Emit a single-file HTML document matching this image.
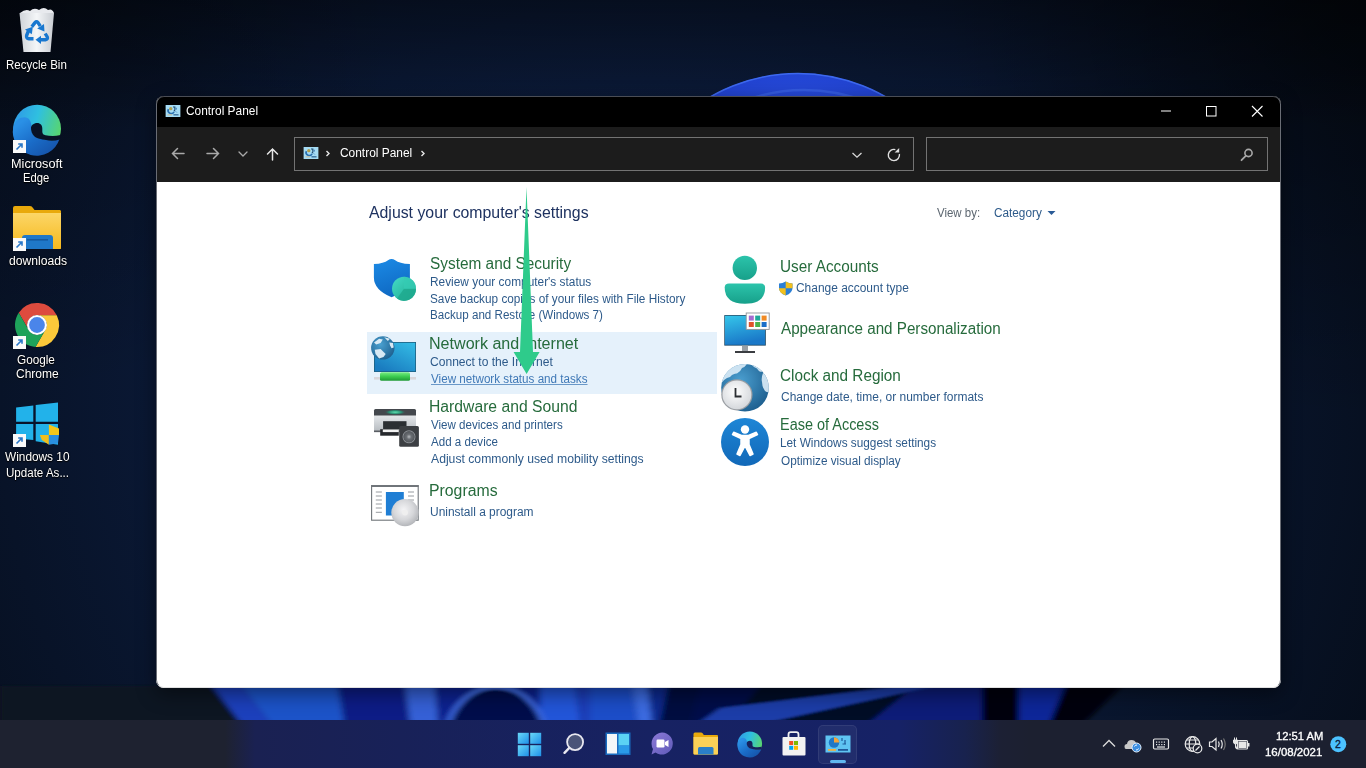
<!DOCTYPE html>
<html><head><meta charset="utf-8">
<style>
html,body{margin:0;padding:0;width:1366px;height:768px;overflow:hidden;}
body{position:relative;background:#060d1c;font-family:'Liberation Sans',sans-serif;}
.t{position:absolute;white-space:nowrap;font-family:'Liberation Sans',sans-serif;}
.abs{position:absolute;}
svg{position:absolute;overflow:visible;}
.dl{color:#fff;text-shadow:0 0 2px rgba(0,0,0,.9),0 1px 1px rgba(0,0,0,.8);}
</style></head><body>
<svg class="abs" style="left:0;top:0" width="1366" height="768" viewBox="0 0 1366 768">
<defs>
<radialGradient id="bg" cx="640" cy="400" r="800" gradientUnits="userSpaceOnUse">
<stop offset="0" stop-color="#10244c"/><stop offset="0.6" stop-color="#0a1834"/><stop offset="1" stop-color="#060e1c"/>
</radialGradient>
<radialGradient id="tr" cx="1366" cy="0" r="420" gradientUnits="userSpaceOnUse">
<stop offset="0" stop-color="#000" stop-opacity="0.5"/><stop offset="1" stop-color="#000" stop-opacity="0"/>
</radialGradient>
<linearGradient id="tl" x1="0" y1="0" x2="0" y2="130" gradientUnits="userSpaceOnUse">
<stop offset="0" stop-color="#000" stop-opacity="0.45"/><stop offset="1" stop-color="#000" stop-opacity="0"/>
</linearGradient>
<radialGradient id="tl2" cx="0" cy="0" r="400" gradientUnits="userSpaceOnUse">
<stop offset="0" stop-color="#000" stop-opacity="0.3"/><stop offset="1" stop-color="#000" stop-opacity="0"/>
</radialGradient>
<radialGradient id="arc" cx="798" cy="150" r="120" gradientUnits="userSpaceOnUse">
<stop offset="0" stop-color="#2a50e0"/><stop offset="1" stop-color="#1f3fcc"/>
</radialGradient>
</defs>
<rect width="1366" height="768" fill="url(#bg)"/>
<rect width="1366" height="768" fill="url(#tr)"/>
<rect width="1366" height="768" fill="url(#tl)"/>
<rect width="1366" height="768" fill="url(#tl2)"/>
<circle cx="798" cy="249" r="176" fill="url(#arc)"/>
<circle cx="798" cy="249" r="175.5" fill="none" stroke="#3d68ee" stroke-width="1.5"/>
<circle cx="804" cy="262" r="172" fill="none" stroke="#3a62e4" stroke-width="2.5" opacity="0.7"/>
<filter id="bl" x="-5%" y="-50%" width="110%" height="200%"><feGaussianBlur stdDeviation="3 1"/></filter>
<g filter="url(#bl)"><polygon points="0,686 212,686 240,722 0,722" fill="#0b1424"/><polygon points="212,686 242,686 270,722 240,722" fill="#1b40bc"/><polygon points="242,686 338,686 344,722 270,722" fill="#1f53c8"/><polygon points="338,686 405,686 410,722 344,722" fill="#0c1e86"/><polygon points="405,686 435,686 438,722 410,722" fill="#3460d6"/><polygon points="435,686 540,686 540,722 438,722" fill="#0d2090"/><polygon points="540,686 575,686 580,722 540,722" fill="#2455d8"/><polygon points="575,686 590,686 590,722 580,722" fill="#1a3cb8"/><polygon points="590,686 632,686 638,722 590,722" fill="#1e4ec8"/><polygon points="632,686 648,686 652,722 638,722" fill="#3a6ae0"/><polygon points="648,686 668,686 660,722 652,722" fill="#102a90"/><polygon points="668,686 700,686 690,722 660,722" fill="#050a40"/><polygon points="700,686 760,686 730,722 690,722" fill="#06104a"/><polygon points="760,686 915,686 870,722 730,722" fill="#040a28"/><polygon points="915,686 982,686 982,722 870,722" fill="#0a1c78"/><polygon points="982,686 1019,686 1019,722 982,722" fill="#03050e"/><polygon points="1019,686 1065,686 1050,722 1019,722" fill="#0c2898"/><polygon points="1065,686 1122,686 1085,722 1050,722" fill="#020408"/>
<polygon points="700,722 770,722 935,686 900,686 720,708" fill="#1d3ca8"/><ellipse cx="496" cy="740" rx="50" ry="53" fill="#050a4c" stroke="#3a66dc" stroke-width="5"/></g>
</svg>
<svg style="left:18px;top:7px" width="38" height="46" viewBox="0 0 38 46">
<defs><linearGradient id="rb" x1="0" y1="0" x2="1" y2="0">
<stop offset="0" stop-color="#cfd3d8"/><stop offset="0.5" stop-color="#f4f6f8"/><stop offset="1" stop-color="#c8ccd2"/></linearGradient></defs>
<path d="M1.5 6 L36 6 L32.5 45 L5.5 45 Z" fill="url(#rb)"/>
<path d="M2 6 Q8 1 12 4 Q16 0 21 3 Q26 -1 30 3 Q34 1 36 6 Z" fill="#e8eaee"/>
<g stroke="#1877cf" stroke-width="3.4" fill="none" stroke-linejoin="round" stroke-linecap="butt">
<path d="M13.8 19.8 L17 15.6 Q18.5 14 20 15.6 L22.3 19.2"/>
<path d="M10.6 23.5 L8.6 28.5 Q8 31.5 11 31.8 L15.5 31.8"/>
<path d="M27.2 26.5 L29.3 30 Q30 32.5 27.5 32.8 L22.5 32.8"/>
</g>
<g fill="#1877cf">
<path d="M19.2 21.5 L26.5 24.5 L26 17 Z"/>
<path d="M7 22.5 L14.8 19.8 L13.8 27.2 Z"/>
<path d="M23 28.8 L17.5 32.8 L23 37 Z"/>
</g>
</svg>
<div class="t" style="left:6.49px;top:57.47px;font-size:12.5px;line-height:16px;color:#fff;transform:scaleX(0.9219);transform-origin:0 0;text-shadow:0 0 2px #000,0 1px 1px #000;">Recycle Bin</div>
<svg style="left:10px;top:102px" width="54" height="54" viewBox="0 0 54 54">
<defs>
<linearGradient id="ed1a" x1="0" y1="0.3" x2="1" y2="0.6"><stop offset="0" stop-color="#2f9be6"/><stop offset="0.45" stop-color="#2fc0e0"/><stop offset="1" stop-color="#5ad66a"/></linearGradient>
<linearGradient id="ed1b" x1="0.1" y1="0.2" x2="0.8" y2="1"><stop offset="0" stop-color="#2a90e6"/><stop offset="0.5" stop-color="#1a6cc8"/><stop offset="1" stop-color="#1552a8"/></linearGradient>
</defs>
<circle cx="27.1" cy="26.7" r="23.9" fill="url(#ed1a)"/>
<path d="M3.3 25 C5 18.5 9.5 15.3 14.5 15.3 C19 15.3 21.5 19.5 21.5 25 C21.2 28 22 31.5 24 33.5 C27 36.5 31 36.5 36 37.5 C40 38.5 45 38.5 49.5 37 A23.9 23.9 0 0 1 3.3 25 Z" fill="url(#ed1b)"/>
<path d="M21 25.5 C21.5 22.5 24.5 21 27.3 21 C30.3 21 32.3 23.3 32.3 26.5 L32.3 29.8 C32.3 31.8 33.5 33 35.5 33.3 C39.5 33.9 44.5 34.4 50.6 33 L49.6 37.5 C45 39 40 39 36 38 C31 37 27 37 24 34 C22 32 20.8 28.5 21 25.5 Z" fill="#081226"/>
</svg>
<svg style="left:13px;top:140px" width="13" height="13" viewBox="0 0 13 13">
<rect x="0" y="0" width="13" height="13" fill="#fafafa"/>
<path d="M3.5 9.5 L9 4 M5.2 4 H9 V7.8" stroke="#2a78c8" stroke-width="1.6" fill="none"/>
</svg>
<div class="t" style="left:10.99px;top:155.57px;font-size:12.5px;line-height:16px;color:#fff;transform:scaleX(1.0160);transform-origin:0 0;text-shadow:0 0 2px #000,0 1px 1px #000;">Microsoft</div>
<div class="t" style="left:22.90px;top:170.37px;font-size:12.5px;line-height:16px;color:#fff;transform:scaleX(0.9000);transform-origin:0 0;text-shadow:0 0 2px #000,0 1px 1px #000;">Edge</div>
<svg style="left:13px;top:205px" width="49" height="45" viewBox="0 0 49 45">
<defs><linearGradient id="fg" x1="0" y1="0" x2="0" y2="1"><stop offset="0" stop-color="#fcd667"/><stop offset="1" stop-color="#f6b91d"/></linearGradient></defs>
<path d="M0 3 Q0 1 2 1 H17 Q19 1 20 3 L21.5 5 H47 Q48 5 48 6.5 V43 Q48 44 47 44 H1 Q0 44 0 43 Z" fill="#e9a90b"/>
<path d="M0 8 H48 V43 Q48 44 47 44 H1 Q0 44 0 43 Z" fill="url(#fg)"/>
<path d="M9 44 V33 Q9 30 12 30 H37 Q40 30 40 33 V44 Z" fill="#1f78c8"/>
<rect x="14" y="34" width="21" height="1.6" fill="#145aa0"/>
</svg>
<svg style="left:13px;top:238px" width="13" height="13" viewBox="0 0 13 13">
<rect x="0" y="0" width="13" height="13" fill="#fafafa"/>
<path d="M3.5 9.5 L9 4 M5.2 4 H9 V7.8" stroke="#2a78c8" stroke-width="1.6" fill="none"/>
</svg>
<div class="t" style="left:8.60px;top:253.32px;font-size:12.5px;line-height:16px;color:#fff;transform:scaleX(0.9729);transform-origin:0 0;text-shadow:0 0 2px #000,0 1px 1px #000;">downloads</div>
<svg style="left:15px;top:303px" width="44" height="44" viewBox="-22 -22 44 44">
<path d="M-8.40 4.85 L-18.27 -12.25 A22 22 0 0 1 19.75 -9.70 L0.00 -9.70 A9.7 9.7 0 0 0 -8.40 4.85Z" fill="#dd4b3e"/>
<path d="M0.00 -9.70 L19.75 -9.70 A22 22 0 0 1 -1.47 21.95 L8.40 4.85 A9.7 9.7 0 0 0 0.00 -9.70Z" fill="#fbc93a"/>
<path d="M8.40 4.85 L-1.47 21.95 A22 22 0 0 1 -18.27 -12.25 L-8.40 4.85 A9.7 9.7 0 0 0 8.40 4.85Z" fill="#1ea25a"/>
<circle r="10.0" fill="#fff"/><circle r="7.9" fill="#4a85ea"/>
</svg>
<svg style="left:13px;top:336px" width="13" height="13" viewBox="0 0 13 13">
<rect x="0" y="0" width="13" height="13" fill="#fafafa"/>
<path d="M3.5 9.5 L9 4 M5.2 4 H9 V7.8" stroke="#2a78c8" stroke-width="1.6" fill="none"/>
</svg>
<div class="t" style="left:17.22px;top:351.67px;font-size:12.5px;line-height:16px;color:#fff;transform:scaleX(0.9400);transform-origin:0 0;text-shadow:0 0 2px #000,0 1px 1px #000;">Google</div>
<div class="t" style="left:15.79px;top:366.47px;font-size:12.5px;line-height:16px;color:#fff;transform:scaleX(0.9614);transform-origin:0 0;text-shadow:0 0 2px #000,0 1px 1px #000;">Chrome</div>
<svg style="left:15px;top:401px" width="45" height="45" viewBox="0 0 45 45">
<path d="M1.1 6.5 L18.3 4.4 V20.7 H1.1 Z" fill="#22b2ea"/>
<path d="M20.7 4.1 L43 1.4 V20.7 H20.7 Z" fill="#22b2ea"/>
<path d="M1.1 23 H18.3 V39 L1.1 37.6 Z" fill="#22b2ea"/>
<path d="M20.7 23 H43 V43.7 L20.7 40.3 Z" fill="#22b2ea"/>
<path d="M33.9 23.4 L44 27.5 V33.9 H33.9Z" fill="#f4c71a"/>
<path d="M24.8 33.9 H33.9 V43.7 L26.8 39Z" fill="#f0bf1c"/>
<path d="M33.9 33.9 H44 L43 42.3 L33.9 43.7Z" fill="#2a8fe0"/>
</svg>
<svg style="left:13px;top:434px" width="13" height="13" viewBox="0 0 13 13">
<rect x="0" y="0" width="13" height="13" fill="#fafafa"/>
<path d="M3.5 9.5 L9 4 M5.2 4 H9 V7.8" stroke="#2a78c8" stroke-width="1.6" fill="none"/>
</svg>
<div class="t" style="left:4.80px;top:449.47px;font-size:12.5px;line-height:16px;color:#fff;transform:scaleX(0.9471);transform-origin:0 0;text-shadow:0 0 2px #000,0 1px 1px #000;">Windows 10</div>
<div class="t" style="left:5.61px;top:464.57px;font-size:12.5px;line-height:16px;color:#fff;transform:scaleX(0.9254);transform-origin:0 0;text-shadow:0 0 2px #000,0 1px 1px #000;">Update As...</div>
<div class="abs" style="left:156px;top:96px;width:1125px;height:592px;border-radius:8px;overflow:hidden;background:#fff;box-shadow:0 6px 20px rgba(0,0,0,.45);">
<div class="abs" style="left:0;top:0;width:1125px;height:31px;background:#000;"></div>
<div class="abs" style="left:0;top:31px;width:1125px;height:55px;background:#1c1c1c;"></div>
<div class="abs" style="left:0;top:0;width:1123px;height:590px;border:1px solid #4a4d55;border-radius:8px;border-bottom-color:#e0e0e0;border-left-color:#6a6d75;border-right-color:#6a6d75;"></div>
</div>
<svg style="left:165px;top:105px" width="16" height="12" viewBox="0 0 16 13">
<rect x="0" y="0" width="16" height="13" fill="#a6dcf4"/>
<path d="M3 4.5 A3.3 3.3 0 0 0 9.2 7.3" stroke="#2a70b0" stroke-width="1.8" fill="none"/>
<circle cx="5.6" cy="4" r="1.8" fill="#b0a050"/>
<path d="M8 2.2 H10 V5.5 L9 6.5" stroke="#1d4a70" stroke-width="1.2" fill="none"/>
<path d="M11.5 3 V5 M11 7 L12 8" stroke="#2a6ab0" stroke-width="1"/>
<rect x="2" y="10" width="5" height="1.3" fill="#c8c0a0"/>
<rect x="8.5" y="10" width="5.5" height="1.3" fill="#2a6090"/>
</svg>
<div class="t" style="left:186.20px;top:103.47px;font-size:12.2px;line-height:16px;color:#fff;transform:scaleX(0.9753);transform-origin:0 0;">Control Panel</div>
<svg style="left:1150px;top:100px" width="130" height="22" viewBox="0 0 130 22">
<path d="M11 11 H21" stroke="#fff" stroke-width="1"/>
<rect x="56.5" y="6.5" width="9.5" height="9.5" fill="none" stroke="#fff" stroke-width="1"/>
<path d="M102 6 L112.5 16.5 M112.5 6 L102 16.5" stroke="#fff" stroke-width="1.1"/>
</svg>
<svg style="left:160px;top:140px" width="130" height="28" viewBox="0 0 130 28">
<g stroke="#a9a9a9" stroke-width="1.5" fill="none" stroke-linecap="round">
<path d="M12.5 13.5 H24 M17.5 8.5 L12.5 13.5 L17.5 18.5"/>
<path d="M47 13.5 H58.5 M53.5 8.5 L58.5 13.5 L53.5 18.5"/>
<path d="M79 12 L83 16 L87 12" stroke-width="1.3"/>
</g>
<g stroke="#e6e6e6" stroke-width="1.5" fill="none" stroke-linecap="round">
<path d="M112.5 9 V20 M107.5 14 L112.5 9 L117.5 14"/>
</g>
</svg>
<div class="abs" style="left:294px;top:137px;width:618px;height:32px;border:1px solid #737373;background:#1c1c1c;"></div>
<div class="abs" style="left:926px;top:137px;width:340px;height:32px;border:1px solid #737373;background:#1c1c1c;"></div>
<svg style="left:303px;top:147px" width="16" height="12" viewBox="0 0 16 13">
<rect x="0" y="0" width="16" height="13" fill="#a6dcf4"/>
<path d="M3 4.5 A3.3 3.3 0 0 0 9.2 7.3" stroke="#2a70b0" stroke-width="1.8" fill="none"/>
<circle cx="5.6" cy="4" r="1.8" fill="#b0a050"/>
<path d="M8 2.2 H10 V5.5 L9 6.5" stroke="#1d4a70" stroke-width="1.2" fill="none"/>
<path d="M11.5 3 V5 M11 7 L12 8" stroke="#2a6ab0" stroke-width="1"/>
<rect x="2" y="10" width="5" height="1.3" fill="#c8c0a0"/>
<rect x="8.5" y="10" width="5.5" height="1.3" fill="#2a6090"/>
</svg>
<svg style="left:320px;top:145px" width="110" height="18" viewBox="0 0 110 18">
<g stroke="#e8e8e8" stroke-width="1.4" fill="none">
<path d="M6.5 6 L9 8.5 L6.5 11"/>
<path d="M101.5 6 L104 8.5 L101.5 11"/>
</g></svg>
<div class="t" style="left:339.60px;top:145.44px;font-size:12.0px;line-height:16px;color:#fff;transform:scaleX(0.9931);transform-origin:0 0;">Control Panel</div>
<svg style="left:845px;top:140px" width="70" height="30" viewBox="0 0 70 30">
<path d="M7.5 13 L12 17.2 L16.5 13" stroke="#d8d8d8" stroke-width="1.3" fill="none"/>
<path d="M54.4 14 A5.6 5.6 0 1 1 50.35 9.6" stroke="#e0e0e0" stroke-width="1.4" fill="none"/>
<path d="M49.6 12.5 L54.2 8 L54.2 12.5Z" fill="#e0e0e0"/>
</svg>
<svg style="left:1236px;top:144px" width="22" height="22" viewBox="0 0 22 22">
<circle cx="12.5" cy="9" r="3.6" stroke="#a8a8a8" stroke-width="1.6" fill="none"/>
<path d="M9.8 11.8 L5.5 16.2" stroke="#a8a8a8" stroke-width="1.8" stroke-linecap="round"/>
</svg>
<div class="t" style="left:369.39px;top:202.16px;font-size:16px;line-height:21px;color:#1e3260;transform:scaleX(0.9900);transform-origin:0 0;">Adjust your computer's settings</div>
<div class="t" style="left:937.38px;top:205.44px;font-size:12.0px;line-height:16px;color:#5c6670;transform:scaleX(0.9556);transform-origin:0 0;">View by:</div>
<div class="t" style="left:994.20px;top:205.44px;font-size:12.0px;line-height:16px;color:#2d5a8a;transform:scaleX(0.9813);transform-origin:0 0;">Category</div>
<svg style="left:1046px;top:210px" width="11" height="6" viewBox="0 0 11 6"><path d="M1.5 1 H9.5 L5.5 5Z" fill="#2a5b96"/></svg>
<div class="abs" style="left:367px;top:332px;width:350px;height:62px;background:#e5f1fb;"></div>
<div class="t" style="left:430.02px;top:253.16px;font-size:16px;line-height:21px;color:#266b3c;transform:scaleX(0.9616);transform-origin:0 0;">System and Security</div>
<div class="t" style="left:430.03px;top:273.67px;font-size:12.5px;line-height:16px;color:#2d5a8a;transform:scaleX(0.9497);transform-origin:0 0;">Review your computer's status</div>
<div class="t" style="left:430.03px;top:290.67px;font-size:12.5px;line-height:16px;color:#2d5a8a;transform:scaleX(0.9424);transform-origin:0 0;">Save backup copies of your files with File History</div>
<div class="t" style="left:430.04px;top:307.27px;font-size:12.5px;line-height:16px;color:#2d5a8a;transform:scaleX(0.9286);transform-origin:0 0;">Backup and Restore (Windows 7)</div>
<div class="t" style="left:428.99px;top:333.16px;font-size:16px;line-height:21px;color:#266b3c;transform:scaleX(1.0048);transform-origin:0 0;">Network and Internet</div>
<div class="t" style="left:430.02px;top:353.67px;font-size:12.5px;line-height:16px;color:#2d5a8a;transform:scaleX(0.9654);transform-origin:0 0;">Connect to the Internet</div>
<div class="t" style="left:430.97px;top:370.67px;font-size:12.5px;line-height:16px;color:#3f78b6;transform:scaleX(0.9321);transform-origin:0 0;text-decoration:underline;text-decoration-color:#6a98c8;">View network status and tasks</div>
<div class="t" style="left:429.03px;top:395.76px;font-size:16px;line-height:21px;color:#266b3c;transform:scaleX(0.9819);transform-origin:0 0;">Hardware and Sound</div>
<div class="t" style="left:430.96px;top:416.67px;font-size:12.5px;line-height:16px;color:#2d5a8a;transform:scaleX(0.9259);transform-origin:0 0;">View devices and printers</div>
<div class="t" style="left:430.96px;top:433.67px;font-size:12.5px;line-height:16px;color:#2d5a8a;transform:scaleX(0.9260);transform-origin:0 0;">Add a device</div>
<div class="t" style="left:430.99px;top:450.87px;font-size:12.5px;line-height:16px;color:#2d5a8a;transform:scaleX(0.9749);transform-origin:0 0;">Adjust commonly used mobility settings</div>
<div class="t" style="left:429.02px;top:479.76px;font-size:16px;line-height:21px;color:#266b3c;transform:scaleX(0.9882);transform-origin:0 0;">Programs</div>
<div class="t" style="left:430.02px;top:503.67px;font-size:12.5px;line-height:16px;color:#2d5a8a;transform:scaleX(0.9556);transform-origin:0 0;">Uninstall a program</div>
<div class="t" style="left:780.04px;top:255.66px;font-size:16px;line-height:21px;color:#266b3c;transform:scaleX(0.9569);transform-origin:0 0;">User Accounts</div>
<div class="t" style="left:796.02px;top:280.47px;font-size:12.5px;line-height:16px;color:#2d5a8a;transform:scaleX(0.9551);transform-origin:0 0;">Change account type</div>
<div class="t" style="left:781.00px;top:317.56px;font-size:16px;line-height:21px;color:#266b3c;transform:scaleX(0.9498);transform-origin:0 0;">Appearance and Personalization</div>
<div class="t" style="left:780.04px;top:364.96px;font-size:16px;line-height:21px;color:#266b3c;transform:scaleX(0.9568);transform-origin:0 0;">Clock and Region</div>
<div class="t" style="left:781.00px;top:389.47px;font-size:12.5px;line-height:16px;color:#2d5a8a;transform:scaleX(0.9583);transform-origin:0 0;">Change date, time, or number formats</div>
<div class="t" style="left:780.10px;top:414.46px;font-size:16px;line-height:21px;color:#266b3c;transform:scaleX(0.9037);transform-origin:0 0;">Ease of Access</div>
<div class="t" style="left:780.06px;top:435.37px;font-size:12.5px;line-height:16px;color:#2d5a8a;transform:scaleX(0.9439);transform-origin:0 0;">Let Windows suggest settings</div>
<div class="t" style="left:781.00px;top:452.57px;font-size:12.5px;line-height:16px;color:#2d5a8a;transform:scaleX(0.9417);transform-origin:0 0;">Optimize visual display</div>
<svg style="left:372px;top:257px" width="46" height="42" viewBox="0 0 46 42">
<defs>
<linearGradient id="sh" x1="0" y1="0" x2="0.3" y2="1"><stop offset="0" stop-color="#1c8be6"/><stop offset="1" stop-color="#0f6ac4"/></linearGradient>
<linearGradient id="sc" x1="0" y1="0" x2="1" y2="1"><stop offset="0" stop-color="#44dcc8"/><stop offset="1" stop-color="#1ea98c"/></linearGradient>
</defs>
<path d="M1.9 7 Q12 6.5 16 3.2 Q19.6 0.6 23.2 3.2 Q27.2 6.5 37.9 7 V20.5 Q37.9 33 19.6 40.3 Q1.9 33 1.9 20.5 Z" fill="url(#sh)"/>
<circle cx="32" cy="31.7" r="12" fill="url(#sc)"/>
<path d="M32 31.7 L44 31.7 A12 12 0 0 1 25 41.5 Z" fill="#1fa98e" opacity="0.85"/>
<path d="M32 19.7 L32 31.7 L44 31.7 A12 12 0 0 0 32 19.7Z" fill="#35ccb4" opacity="0.7"/>
</svg>
<svg style="left:370px;top:335px" width="50" height="48" viewBox="0 0 50 48">
<defs>
<linearGradient id="mn" x1="1" y1="0" x2="0.3" y2="1"><stop offset="0" stop-color="#34bde6"/><stop offset="1" stop-color="#1a7cc0"/></linearGradient>
<linearGradient id="gc" x1="0" y1="0" x2="0" y2="1"><stop offset="0" stop-color="#78ee84"/><stop offset="0.5" stop-color="#3ccc50"/><stop offset="1" stop-color="#1f9a35"/></linearGradient>
<radialGradient id="gl" cx="0.4" cy="0.35" r="0.7"><stop offset="0" stop-color="#4aa0d0"/><stop offset="1" stop-color="#1d5f8e"/></radialGradient>
<clipPath id="glc"><circle cx="12.8" cy="12.9" r="11.7"/></clipPath>
</defs>
<rect x="4" y="7" width="42" height="30" fill="#1d5f80"/>
<rect x="4.8" y="7.8" width="40.4" height="28.4" fill="url(#mn)"/>
<rect x="4" y="42" width="42" height="2.6" fill="#d8d6da"/>
<rect x="10" y="37.2" width="30" height="8.5" rx="1.5" fill="url(#gc)"/>
<circle cx="12.8" cy="12.9" r="11.7" fill="url(#gl)"/>
<g clip-path="url(#glc)" fill="#e6f2fa" opacity="0.92">
<path d="M4.75 14.7 L10.6 14 L15.7 19.1 L13.5 22 L9.1 23.4 L5.5 19.1Z"/>
<path d="M4 7.4 L9.1 3.75 L12.8 4.5 L10.6 8.1 L6.2 9.6Z"/>
<path d="M19.3 7.4 L23 8.1 L23.7 12.5 L21.5 13.2 L20 10.3Z"/>
<path d="M14.2 2.3 L20 3.75 L17.9 5.9Z"/>
</g>
</svg>
<svg style="left:372px;top:406px" width="48" height="44" viewBox="0 0 48 44">
<defs><linearGradient id="pb" x1="0" y1="0" x2="0" y2="1"><stop offset="0" stop-color="#e4e7ea"/><stop offset="1" stop-color="#b4b9be"/></linearGradient>
<radialGradient id="pg" cx="0.5" cy="0.5" r="0.5"><stop offset="0" stop-color="#5ee0b0"/><stop offset="0.6" stop-color="#2a8a70"/><stop offset="1" stop-color="#44484d" stop-opacity="0"/></radialGradient>
<radialGradient id="spk" cx="0.5" cy="0.5" r="0.5"><stop offset="0" stop-color="#b8bcc0"/><stop offset="0.35" stop-color="#6a6e73"/><stop offset="0.75" stop-color="#55595e"/><stop offset="0.85" stop-color="#8a8e93"/><stop offset="1" stop-color="#3c3f43"/></radialGradient>
</defs>
<path d="M3.5 3.1 H42.5 Q44 3.1 44 4.6 V9.7 H2 V4.6 Q2 3.1 3.5 3.1Z" fill="#44484d"/>
<ellipse cx="23.2" cy="6.2" rx="11" ry="2.8" fill="url(#pg)"/>
<rect x="2" y="9.7" width="42" height="16.4" fill="url(#pb)"/>
<rect x="2" y="24.5" width="42" height="1.6" fill="#5a5e63"/>
<rect x="11.1" y="15.2" width="23.4" height="8" fill="#2b2f33"/>
<rect x="8.2" y="23.2" width="18.6" height="6.5" fill="#26292d"/>
<rect x="10.8" y="23.5" width="16" height="2.6" fill="#f2f2f2"/>
<rect x="27.2" y="19.9" width="19.7" height="20.8" rx="1.5" fill="#3c3f43"/>
<circle cx="37" cy="30.8" r="7" fill="url(#spk)"/>
</svg>
<svg style="left:370px;top:484px" width="50" height="46" viewBox="0 0 50 46">
<defs><radialGradient id="cd" cx="0.45" cy="0.4" r="0.6"><stop offset="0" stop-color="#f4f4f6"/><stop offset="0.6" stop-color="#d6d7da"/><stop offset="1" stop-color="#b4b6ba"/></radialGradient></defs>
<rect x="1.6" y="1.6" width="46.6" height="34.6" fill="#fff" stroke="#6f7479" stroke-width="1.1"/>
<rect x="1.2" y="1.2" width="47.4" height="1.8" fill="#6f7479"/>
<g stroke="#8a8f94" stroke-width="0.9">
<path d="M5.8 8 H11.9 M5.8 12 H11.9 M5.8 16 H11.9 M5.8 20 H11.9 M5.8 24 H11.9 M5.8 28.3 H11.9"/>
<path d="M38 8 H44 M38 12 H44 M38 16 H44"/>
</g>
<rect x="15.9" y="8" width="17.9" height="23.5" fill="#1f7ed4"/>
<circle cx="35" cy="28.6" r="13.7" fill="url(#cd)"/>
<circle cx="35" cy="28.6" r="3" fill="#efefef"/>
</svg>
<svg style="left:722px;top:254px" width="46" height="52" viewBox="0 0 46 52">
<defs><linearGradient id="ua" x1="0" y1="0" x2="0" y2="1"><stop offset="0" stop-color="#2cc4ab"/><stop offset="1" stop-color="#17a08a"/></linearGradient></defs>
<circle cx="22.8" cy="13.9" r="12.2" fill="url(#ua)"/>
<path d="M2.7 33.5 Q2.7 29.6 7 29.6 H39 Q43.1 29.6 43.1 33.5 Q43.1 49.7 22.9 49.7 Q2.7 49.7 2.7 33.5Z" fill="url(#ua)"/>
</svg>
<svg style="left:778px;top:281px" width="16" height="15" viewBox="0 0 16 15">
<path d="M1 2.5 Q4.5 2.3 7.7 0.5 Q10.9 2.3 14.5 2.5 V7 Q14.5 12 7.7 14.6 Q1 12 1 7Z" fill="#2b7fd6"/>
<path d="M7.7 0.5 Q10.9 2.3 14.5 2.5 V7.3 H7.7Z" fill="#f3c01c"/>
<path d="M1 7.3 H7.7 V14.6 Q1 12 1 7.3Z" fill="#f3c01c"/>
</svg>
<svg style="left:722px;top:311px" width="50" height="44" viewBox="0 0 50 44">
<defs><linearGradient id="ap" x1="0" y1="0" x2="0.3" y2="1"><stop offset="0" stop-color="#35c6ea"/><stop offset="1" stop-color="#1a78c8"/></linearGradient></defs>
<rect x="2.3" y="4.1" width="41.5" height="30.5" fill="#17425f"/>
<rect x="3" y="4.8" width="40" height="29" fill="url(#ap)"/>
<rect x="20" y="34.6" width="6" height="5.4" fill="#9aa0a6"/>
<rect x="13" y="40" width="20" height="2" fill="#3a3d41"/>
<rect x="24.2" y="2" width="23" height="16.4" fill="#fff" stroke="#8f9499" stroke-width="0.9"/>
<rect x="26.8" y="4.6" width="5" height="5" fill="#a56bd0"/>
<rect x="33.2" y="4.6" width="5" height="5" fill="#1fa89a"/>
<rect x="39.6" y="4.6" width="5" height="5" fill="#f08a24"/>
<rect x="26.8" y="11" width="5" height="5" fill="#e0532a"/>
<rect x="33.2" y="11" width="5" height="5" fill="#4bb14b"/>
<rect x="39.6" y="11" width="5" height="5" fill="#1a6fc8"/>
</svg>
<svg style="left:720px;top:363px" width="50" height="50" viewBox="0 0 50 50">
<defs>
<radialGradient id="cg" cx="0.4" cy="0.35" r="0.7"><stop offset="0" stop-color="#4b9fd0"/><stop offset="1" stop-color="#1d5e8e"/></radialGradient>
<radialGradient id="cl" cx="0.45" cy="0.4" r="0.6"><stop offset="0" stop-color="#ffffff"/><stop offset="1" stop-color="#d5d8dc"/></radialGradient>
</defs>
<circle cx="25" cy="24.8" r="23.8" fill="url(#cg)"/>
<clipPath id="cgc"><circle cx="25" cy="24.8" r="23.8"/></clipPath><g clip-path="url(#cgc)" fill="#d9ebf7" opacity="0.92"><path d="M0 22 Q3 17 7 15 Q10 15 12 12 Q15 10 17 10.5 Q21 8 22 5 Q25 4 27 1 L0 0Z"/><path d="M30 0 Q33 4 37 5.5 Q39 9 42 9 Q40 5 44 3 L40 0Z"/><path d="M43 10 Q41 15 42 19 Q42 24 45 28 Q47.5 30 50 29 L50 10Z"/></g>
<circle cx="16.9" cy="31.8" r="15.6" fill="#9a9ea3"/>
<circle cx="16.9" cy="31.8" r="14.4" fill="url(#cl)"/>
<path d="M15.5 25 V33.5 H21.5" stroke="#2c2f33" stroke-width="1.8" fill="none"/>
</svg>
<svg style="left:720px;top:417px" width="50" height="50" viewBox="0 0 50 50">
<defs><linearGradient id="ea" x1="0" y1="0" x2="0" y2="1"><stop offset="0" stop-color="#1e86d6"/><stop offset="1" stop-color="#1168b8"/></linearGradient></defs>
<circle cx="25" cy="25" r="24" fill="url(#ea)"/>
<circle cx="25" cy="12.5" r="4.2" fill="#fff"/>
<path d="M12.5 17.5 L21 21.5 V27.5 L17 37 L20 38.5 L25 29 L30 38.5 L33 37 L29 27.5 V21.5 L37.5 17.5 L36.3 15.3 L28.5 18.5 H21.5 L13.7 15.3Z" fill="#fff" stroke="#fff" stroke-width="1.5" stroke-linejoin="round"/>
</svg>
<svg style="left:0;top:0" width="1366" height="768" viewBox="0 0 1366 768">
<path d="M526.5 187 L533 352 L539.6 352 L526.6 374 L513.6 352 L520 352 Z" fill="#2ecb8b"/>
</svg>
<div class="abs" style="left:0;top:720px;width:1366px;height:48px;background:linear-gradient(90deg,#1e2230 0px,#1e2230 225px,#1a2152 255px,#182158 400px,#172262 650px,#162266 900px,#18224e 965px,#1c2034 1000px,#1c2030 1030px,#1c2030 1366px);"></div>
<div class="abs" style="left:818px;top:725px;width:39px;height:39px;border-radius:5px;background:rgba(255,255,255,0.05);border:1px solid rgba(255,255,255,0.07);box-sizing:border-box;"></div>
<div class="abs" style="left:830px;top:760px;width:16px;height:3px;border-radius:2px;background:#60b8f0;"></div>
<svg style="left:517px;top:732px" width="25" height="25" viewBox="0 0 25 25">
<defs><linearGradient id="st" x1="0" y1="0" x2="1" y2="1"><stop offset="0" stop-color="#6ad8f8"/><stop offset="1" stop-color="#1e90e8"/></linearGradient></defs>
<g fill="url(#st)">
<rect x="0.8" y="0.8" width="11" height="11"/><rect x="13.2" y="0.8" width="11" height="11"/>
<rect x="0.8" y="13.2" width="11" height="11"/><rect x="13.2" y="13.2" width="11" height="11"/>
</g></svg>
<svg style="left:561px;top:731px" width="26" height="26" viewBox="0 0 26 26">
<circle cx="14.1" cy="11.1" r="8" fill="#4a5478" stroke="#e8e8f0" stroke-width="1.8"/>
<path d="M8.3 16.9 L3.5 21.8" stroke="#e8e8f0" stroke-width="2.4" stroke-linecap="round"/>
</svg>
<svg style="left:605px;top:732px" width="26" height="24" viewBox="0 0 26 24">
<rect x="0.5" y="0.5" width="25" height="22.5" fill="#1a6cc0"/>
<rect x="2" y="2" width="10" height="19.5" fill="#f4f6f8"/>
<rect x="13.5" y="2" width="10.5" height="11.5" fill="#5bd2f4"/>
<rect x="13.5" y="13.5" width="10.5" height="8" fill="#2a9ae8"/>
</svg>
<svg style="left:649px;top:731px" width="26" height="26" viewBox="0 0 26 26">
<defs><linearGradient id="tm" x1="0" y1="0" x2="1" y2="1"><stop offset="0" stop-color="#8d7ad8"/><stop offset="1" stop-color="#5e5ab8"/></linearGradient></defs>
<path d="M13 1.5 A11 11 0 1 1 6.5 21.5 L2.5 23.5 L4 18 A11 11 0 0 1 13 1.5Z" fill="url(#tm)"/>
<rect x="7.5" y="8.5" width="8" height="8" rx="1.2" fill="#fff"/>
<path d="M16 11 L19.5 9 V16 L16 14Z" fill="#fff"/>
</svg>
<svg style="left:693px;top:732px" width="26" height="23" viewBox="0 0 26 23">
<path d="M0.5 2 Q0.5 0.5 2 0.5 H8 Q9 0.5 9.8 1.5 L10.8 3 H24 Q25 3 25 4 V21.5 Q25 22.5 24 22.5 H1.5 Q0.5 22.5 0.5 21.5Z" fill="#e9a90b"/>
<path d="M0.5 5 H25 V21.5 Q25 22.5 24 22.5 H1.5 Q0.5 22.5 0.5 21.5Z" fill="#fbd157"/>
<path d="M5 22.5 V16.5 Q5 15 6.5 15 H19 Q20.5 15 20.5 16.5 V22.5Z" fill="#2a7fc8"/>
</svg>
<svg style="left:736px;top:729.9px" width="27.6" height="27.6" viewBox="0 0 54 54">
<defs>
<linearGradient id="ed2a" x1="0" y1="0.3" x2="1" y2="0.6"><stop offset="0" stop-color="#2f9be6"/><stop offset="0.45" stop-color="#2fc0e0"/><stop offset="1" stop-color="#5ad66a"/></linearGradient>
<linearGradient id="ed2b" x1="0.1" y1="0.2" x2="0.8" y2="1"><stop offset="0" stop-color="#2a90e6"/><stop offset="0.5" stop-color="#1a6cc8"/><stop offset="1" stop-color="#1552a8"/></linearGradient>
</defs>
<circle cx="27.1" cy="26.7" r="23.9" fill="url(#ed2a)"/>
<path d="M3.3 25 C5 18.5 9.5 15.3 14.5 15.3 C19 15.3 21.5 19.5 21.5 25 C21.2 28 22 31.5 24 33.5 C27 36.5 31 36.5 36 37.5 C40 38.5 45 38.5 49.5 37 A23.9 23.9 0 0 1 3.3 25 Z" fill="url(#ed2b)"/>
<path d="M21 25.5 C21.5 22.5 24.5 21 27.3 21 C30.3 21 32.3 23.3 32.3 26.5 L32.3 29.8 C32.3 31.8 33.5 33 35.5 33.3 C39.5 33.9 44.5 34.4 50.6 33 L49.6 37.5 C45 39 40 39 36 38 C31 37 27 37 24 34 C22 32 20.8 28.5 21 25.5 Z" fill="#17205c"/>
</svg>
<svg style="left:781px;top:731px" width="26" height="26" viewBox="0 0 26 26">
<path d="M7.5 6.5 V3.5 Q7.5 1.2 9.8 1.2 H15.2 Q17.5 1.2 17.5 3.5 V6.5" stroke="#f0f0f0" stroke-width="1.8" fill="none"/>
<rect x="1.5" y="6" width="23" height="18.5" rx="1" fill="#f2f2f2"/>
<rect x="8.2" y="10" width="4" height="4" fill="#f25022"/><rect x="13" y="10" width="4" height="4" fill="#7fba00"/>
<rect x="8.2" y="14.8" width="4" height="4" fill="#00a4ef"/><rect x="13" y="14.8" width="4" height="4" fill="#ffb900"/>
</svg>
<svg style="left:825px;top:735px" width="26" height="18" viewBox="0 0 26 18">
<rect x="0.5" y="0.5" width="25" height="17" fill="#5fc4f2"/>
<circle cx="9" cy="7.5" r="5.2" fill="#1f78c8"/>
<path d="M9 7.5 V2.3 A5.2 5.2 0 0 1 14.2 7.5Z" fill="#f2a33a"/>
<path d="M17 3 V6 M20 5 V9 M17.5 9 H21" stroke="#1f5a9a" stroke-width="1.2"/>
<rect x="3" y="14" width="8" height="1.8" fill="#f0b040"/>
<rect x="13" y="14" width="10" height="1.8" fill="#1f5a9a"/>
</svg>
<svg style="left:1095px;top:732px" width="165" height="24" viewBox="0 0 165 24">
<path d="M8 14.5 L14 8.5 L20 14.5" stroke="#dcdcdc" stroke-width="1.3" fill="none"/>
<g>
<path d="M31 17 Q29.5 17 29.5 14.5 Q29.5 12 32 12 Q32.5 8 36.5 8 Q40 8 41 11 Q44 11 44 14 Q44 17 41 17Z" fill="#c8c8c8"/>
<circle cx="41.5" cy="15.5" r="4.5" fill="#3c8ee0" stroke="#e8f2fc" stroke-width="1"/>
<path d="M39.5 14.5 Q40 12.8 42 13 M43.5 16.5 Q43 18.2 41 18" stroke="#fff" stroke-width="1" fill="none"/>
</g>
<rect x="58.5" y="7" width="15" height="10" rx="1.2" fill="none" stroke="#e8e8e8" stroke-width="1.2"/>
<g fill="#e8e8e8"><rect x="61" y="9.5" width="1.2" height="1.2"/><rect x="63.6" y="9.5" width="1.2" height="1.2"/><rect x="66.2" y="9.5" width="1.2" height="1.2"/><rect x="68.8" y="9.5" width="1.2" height="1.2"/>
<rect x="61" y="12" width="1.2" height="1.2"/><rect x="63.6" y="12" width="1.2" height="1.2"/><rect x="66.2" y="12" width="1.2" height="1.2"/><rect x="68.8" y="12" width="1.2" height="1.2"/>
<rect x="62" y="14.4" width="8" height="1.2"/></g>
<g stroke="#e8e8e8" stroke-width="1.2" fill="none">
<circle cx="97.5" cy="12" r="7.3"/>
<ellipse cx="97.5" cy="12" rx="3.3" ry="7.3"/>
<path d="M90.2 12 H104.8 M91.5 8 H103.5 M91.5 16 H103.5"/>
</g>
<circle cx="102.5" cy="16.5" r="4.3" fill="#1c2030" stroke="#e8e8e8" stroke-width="1.2"/>
<path d="M100.5 18.5 L104.5 14.5" stroke="#e8e8e8" stroke-width="1.2"/>
<path d="M114.5 10 H117 L121 6.5 V18 L117 14.5 H114.5Z" fill="none" stroke="#e8e8e8" stroke-width="1.2"/>
<path d="M123.5 9.5 Q125 12.2 123.5 15 M126 8 Q128.5 12.2 126 16.5" stroke="#e8e8e8" stroke-width="1.2" fill="none"/>
<path d="M128.5 6.5 Q132 12.2 128.5 18" stroke="#777" stroke-width="1.2" fill="none"/>
<g stroke="#e8e8e8" stroke-width="1.2" fill="none">
<rect x="142.5" y="8.5" width="10" height="8.5" rx="1"/>
</g>
<rect x="143.5" y="9.5" width="8" height="6.5" fill="#e8e8e8"/>
<rect x="153" y="11" width="1.5" height="3.5" fill="#e8e8e8"/>
<path d="M139.5 5.5 V8 M141.5 5.5 V8 M138.5 8 H142.5 V10 Q142.5 12 140.5 12 Q138.5 12 138.5 10Z M140.5 12 V15 Q140.5 17 142.5 17" stroke="#e8e8e8" stroke-width="1" fill="#e8e8e8"/>
</svg>
<div class="t" style="left:1275.55px;top:729.06px;font-size:10.5px;line-height:14px;color:#fff;transform:scaleX(1.0674);transform-origin:0 0;-webkit-text-stroke:0.3px #fff;">12:51 AM</div>
<div class="t" style="left:1265.36px;top:745.06px;font-size:10.5px;line-height:14px;color:#fff;transform:scaleX(1.0904);transform-origin:0 0;-webkit-text-stroke:0.3px #fff;">16/08/2021</div>
<svg style="left:1330px;top:736px" width="17" height="17" viewBox="0 0 17 17"><circle cx="8.3" cy="8.2" r="8" fill="#4cc2ff"/></svg>
<div class="t" style="left:1335.00px;top:737.36px;font-size:10.5px;line-height:14px;color:#0b1a3a;-webkit-text-stroke:0.3px #0b1a3a;">2</div>
</body></html>
